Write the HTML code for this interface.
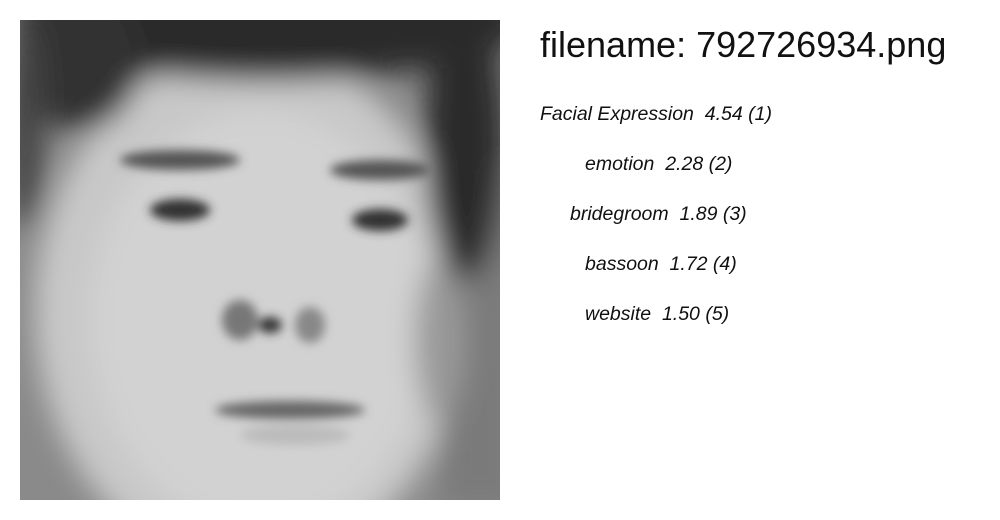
<!DOCTYPE html>
<html><head><meta charset="utf-8"><style>
html,body{margin:0;width:1000px;height:520px;overflow:hidden}
body{background:#fff;position:relative;font-family:"Liberation Sans",sans-serif;color:#111}
.t{position:absolute;left:540px;top:24px;font-size:36px;white-space:pre}
.l{position:absolute;font-size:19.5px;font-style:italic;white-space:pre}
svg{display:block}
</style></head><body>
<svg style="position:absolute;left:20px;top:20px" width="480" height="480" viewBox="0 0 480 480">
<defs>
<filter id="b" x="-50%" y="-50%" width="200%" height="200%"><feGaussianBlur stdDeviation="14"/></filter>
<filter id="s" x="-50%" y="-50%" width="200%" height="200%"><feGaussianBlur stdDeviation="5"/></filter>
<clipPath id="c"><rect width="480" height="480"/></clipPath>
</defs>
<g clip-path="url(#c)">
<rect width="480" height="480" fill="#8a8a8a"/>
<g filter="url(#b)">
<ellipse cx="230" cy="290" rx="215" ry="260" fill="#c8c8c8"/>
<ellipse cx="240" cy="300" rx="170" ry="210" fill="#d2d2d2"/>
<rect x="420" y="150" width="80" height="340" fill="#7a7a7a"/>
<ellipse cx="250" cy="0" rx="260" ry="60" fill="#2a2a2a"/>
<ellipse cx="60" cy="40" rx="60" ry="70" fill="#333"/>
<ellipse cx="445" cy="120" rx="40" ry="140" fill="#2a2a2a"/>
<ellipse cx="5" cy="100" rx="20" ry="110" fill="#444"/>
<ellipse cx="420" cy="320" rx="25" ry="80" fill="#999"/>
</g>
<g filter="url(#s)">
<ellipse cx="160" cy="140" rx="60" ry="10" fill="#555"/>
<ellipse cx="360" cy="150" rx="50" ry="10" fill="#555"/>
<ellipse cx="160" cy="190" rx="30" ry="11" fill="#333"/>
<ellipse cx="360" cy="200" rx="28" ry="11" fill="#333"/>
<ellipse cx="250" cy="305" rx="12" ry="8" fill="#333"/>
<ellipse cx="220" cy="300" rx="18" ry="20" fill="#777"/>
<ellipse cx="290" cy="305" rx="15" ry="18" fill="#888"/>
<ellipse cx="270" cy="390" rx="75" ry="9" fill="#666"/>
<ellipse cx="275" cy="415" rx="55" ry="10" fill="#bbb"/>
</g>
</g>
</svg>
<div class="t">filename: 792726934.png</div>
<div class="l" style="left:540px;top:103px">Facial Expression  4.54 (1)</div>
<div class="l" style="left:585px;top:153px">emotion  2.28 (2)</div>
<div class="l" style="left:570px;top:203px">bridegroom  1.89 (3)</div>
<div class="l" style="left:585px;top:253px">bassoon  1.72 (4)</div>
<div class="l" style="left:585px;top:303px">website  1.50 (5)</div>
</body></html>
